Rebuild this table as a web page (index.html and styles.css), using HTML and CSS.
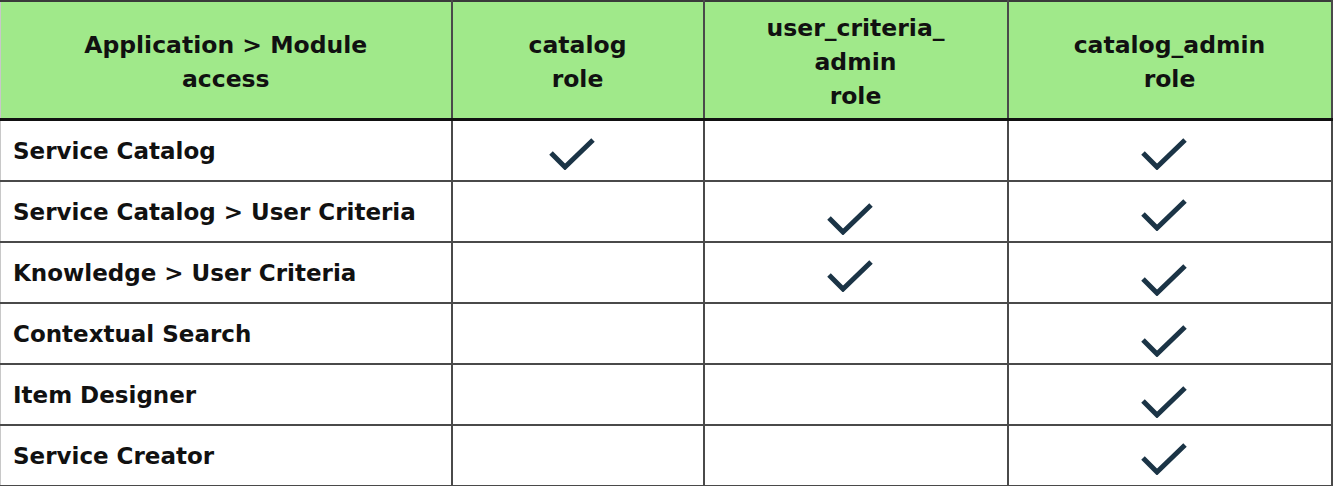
FILE: index.html
```html
<!DOCTYPE html>
<html>
<head>
<meta charset="utf-8">
<link rel="stylesheet" href="styles.css">
</head>
<body>
<table class="grid">
  <colgroup>
    <col class="c1"><col class="c2"><col class="c3"><col class="c4">
  </colgroup>
  <thead>
    <tr>
      <th>Application &gt; Module<br>access</th>
      <th>catalog<br>role</th>
      <th>user_criteria_<br>admin<br>role</th>
      <th>catalog_admin<br>role</th>
    </tr>
  </thead>
  <tbody>
    <tr>
      <td class="name">Service Catalog</td>
      <td class="mark"><svg class="check" viewBox="0 0 48 34"><polyline points="3,17 17,31 45,4"/></svg></td>
      <td class="mark"></td>
      <td class="mark"><svg class="check" viewBox="0 0 48 34"><polyline points="3,17 17,31 45,4"/></svg></td>
    </tr>
    <tr>
      <td class="name">Service Catalog &gt; User Criteria</td>
      <td class="mark"></td>
      <td class="mark"><svg class="check low" viewBox="0 0 48 34"><polyline points="3,17 17,31 45,4"/></svg></td>
      <td class="mark"><svg class="check" viewBox="0 0 48 34"><polyline points="3,17 17,31 45,4"/></svg></td>
    </tr>
    <tr>
      <td class="name">Knowledge &gt; User Criteria</td>
      <td class="mark"></td>
      <td class="mark"><svg class="check" viewBox="0 0 48 34"><polyline points="3,17 17,31 45,4"/></svg></td>
      <td class="mark"><svg class="check low" viewBox="0 0 48 34"><polyline points="3,17 17,31 45,4"/></svg></td>
    </tr>
    <tr>
      <td class="name">Contextual Search</td>
      <td class="mark"></td>
      <td class="mark"></td>
      <td class="mark"><svg class="check low" viewBox="0 0 48 34"><polyline points="3,17 17,31 45,4"/></svg></td>
    </tr>
    <tr>
      <td class="name">Item Designer</td>
      <td class="mark"></td>
      <td class="mark"></td>
      <td class="mark"><svg class="check low" viewBox="0 0 48 34"><polyline points="3,17 17,31 45,4"/></svg></td>
    </tr>
    <tr>
      <td class="name">Service Creator</td>
      <td class="mark"></td>
      <td class="mark"></td>
      <td class="mark"><svg class="check" viewBox="0 0 48 34"><polyline points="3,17 17,31 45,4"/></svg></td>
    </tr>
  </tbody>
</table>
</body>
</html>
```

FILE: styles.css
```css
html, body {
  margin: 0;
  padding: 0;
  background: #ffffff;
}

.grid {
  border-collapse: collapse;
  table-layout: fixed;
  width: 1331px;
  font-family: "DejaVu Sans", "Liberation Sans", sans-serif;
  font-weight: bold;
  color: #111111;
}

.c1 { width: 451px; }
.c2 { width: 252px; }
.c3 { width: 304px; }
.c4 { width: 324px; }

.grid th,
.grid td {
  border: 2px solid #4a4a4a;
  padding: 0;
}

.grid th:first-child,
.grid td:first-child {
  border-left: 1px solid #c8c8c8;
}

.grid th {
  background: #a0e98a;
  height: 112px;
  font-size: 23.5px;
  line-height: 34px;
  text-align: center;
  vertical-align: middle;
  border-top: 2px solid #3a3a3a;
  border-bottom: 3px solid #111111;
  padding-top: 4px;
}

.grid td {
  height: 59px;
  font-size: 23px;
  vertical-align: middle;
}

.name {
  padding-left: 12px !important;
  text-align: left;
}

.mark {
  text-align: center;
}

.check {
  display: block;
  width: 48px;
  height: 34px;
  margin: 0 auto;
  position: relative;
  left: -6px;
  top: 2px;
}

.check.low {
  top: 6px;
}

.check polyline {
  fill: none;
  stroke: #1b3446;
  stroke-width: 5;
  stroke-linecap: butt;
  stroke-linejoin: miter;
}
```
